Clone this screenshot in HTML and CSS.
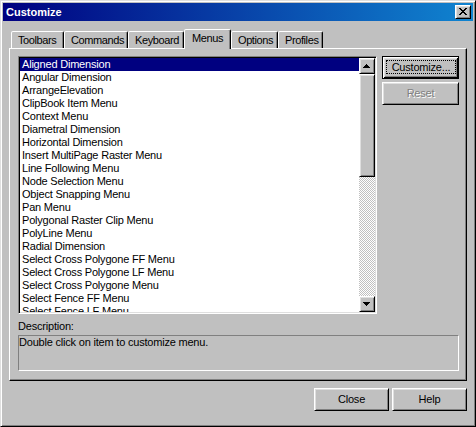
FILE: index.html
```html
<!DOCTYPE html>
<html>
<head>
<meta charset="utf-8">
<title>Customize</title>
<link rel="stylesheet" href="styles.css">
</head>
<body>
<div class="window">
  <div class="titlebar">
    <span class="title">Customize</span>
    <div class="tb-close">
      <svg width="8" height="7" viewBox="0 0 8 7" shape-rendering="crispEdges"><path fill="#000" d="M0 0h2v1H0zM6 0h2v1H6zM1 1h2v1H1zM5 1h2v1H5zM2 2h4v1H2zM3 3h2v1H3zM2 4h4v1H2zM1 5h2v1H1zM5 5h2v1H5zM0 6h2v1H0zM6 6h2v1H6z"/></svg>
    </div>
  </div>
  <div class="tabs">
    <div class="tab w-toolbars">Toolbars</div>
    <div class="tab w-commands">Commands</div>
    <div class="tab w-keyboard">Keyboard</div>
    <div class="tab active w-menus">Menus</div>
    <div class="tab w-options">Options</div>
    <div class="tab w-profiles">Profiles</div>
  </div>
  <div class="panel">
    <div class="top-row">
      <div class="listbox">
        <div class="items">
          <div class="item sel">Aligned Dimension</div>
          <div class="item">Angular Dimension</div>
          <div class="item">ArrangeElevation</div>
          <div class="item">ClipBook Item Menu</div>
          <div class="item">Context Menu</div>
          <div class="item">Diametral Dimension</div>
          <div class="item">Horizontal Dimension</div>
          <div class="item">Insert MultiPage Raster Menu</div>
          <div class="item">Line Following Menu</div>
          <div class="item">Node Selection Menu</div>
          <div class="item">Object Snapping Menu</div>
          <div class="item">Pan Menu</div>
          <div class="item">Polygonal Raster Clip Menu</div>
          <div class="item">PolyLine Menu</div>
          <div class="item">Radial Dimension</div>
          <div class="item">Select Cross Polygone FF Menu</div>
          <div class="item">Select Cross Polygone LF Menu</div>
          <div class="item">Select Cross Polygone Menu</div>
          <div class="item">Select Fence FF Menu</div>
          <div class="item">Select Fence LF Menu</div>
        </div>
        <div class="scrollbar">
          <div class="sb-btn">
            <svg width="7" height="4" viewBox="0 0 7 4" shape-rendering="crispEdges"><path fill="#000" d="M3 0h1v1H3zM2 1h3v1H2zM1 2h5v1H1zM0 3h7v1H0z"/></svg>
          </div>
          <div class="sb-track"><div class="sb-thumb"></div></div>
          <div class="sb-btn">
            <svg width="7" height="4" viewBox="0 0 7 4" shape-rendering="crispEdges"><path fill="#000" d="M0 0h7v1H0zM1 1h5v1H1zM2 2h3v1H2zM3 3h1v1H3z"/></svg>
          </div>
        </div>
      </div>
      <div class="side-buttons">
        <div class="btn default"><span class="focus">Customize...</span></div>
        <div class="btn disabled">Reset</div>
      </div>
    </div>
    <div class="desc-label">Description:</div>
    <div class="desc-box">Double click on item to customize menu.</div>
  </div>
  <div class="footer">
    <div class="btn foot-btn">Close</div>
    <div class="btn foot-btn">Help</div>
  </div>
</div>
</body>
</html>
```
FILE: styles.css
```css
* { box-sizing: border-box; }
html, body { margin: 0; padding: 0; }
body {
  width: 476px;
  height: 427px;
  overflow: hidden;
  background: #c0c0c0;
  font-family: "Liberation Sans", Arial, sans-serif;
  font-size: 11px;
  letter-spacing: -0.2px;
  color: #000;
}
.window {
  width: 476px;
  height: 427px;
  background: #c0c0c0;
  border: 1px solid;
  border-color: #dfdfdf #000 #000 #dfdfdf;
  box-shadow: inset 1px 1px #fff, inset -1px -1px #808080;
  padding: 2px;
  display: flex;
  flex-direction: column;
}
.titlebar {
  height: 18px;
  flex: none;
  background: linear-gradient(to right, #000080, #1084d0);
  display: flex;
  align-items: flex-start;
  justify-content: space-between;
  padding: 0 2px 0 3px;
}
.title {
  color: #fff;
  font-weight: bold;
  line-height: 18px;
  letter-spacing: 0;
}
.tb-close {
  width: 16px;
  height: 14px;
  margin-top: 2px;
  background: #c0c0c0;
  border: 1px solid;
  border-color: #fff #000 #000 #fff;
  box-shadow: inset 1px 1px #dfdfdf, inset -1px -1px #808080;
  padding: 2px 0 0 3px;
}
.tb-close svg, .sb-btn svg { display: block; }

.tabs {
  display: flex;
  align-items: flex-end;
  height: 19px;
  flex: none;
  margin-top: 8px;
  padding-left: 8px;
  position: relative;
  z-index: 1;
}
.tab {
  height: 17px;
  line-height: 16px;
  letter-spacing: -0.4px;
  background: #c0c0c0;
  border: 1px solid;
  border-bottom: none;
  border-color: #fff #000 transparent #fff;
  border-radius: 2px 2px 0 0;
  box-shadow: inset -1px 0 #808080;
  padding-left: 6px;
  white-space: nowrap;
}
.tab.active {
  height: 20px;
  margin-bottom: -1px;
  padding-left: 7px;
}
.w-toolbars { width: 53px; }
.w-commands { width: 64px; }
.w-keyboard { width: 56px; }
.w-menus { width: 47px; }
.w-options { width: 47px; }
.w-profiles { width: 45px; }

.panel {
  margin: 0 6px;
  height: 333px;
  flex: none;
  border: 1px solid;
  border-color: #fff #000 #000 #fff;
  box-shadow: inset -1px -1px #808080;
  padding: 7px 7px 9px 8px;
  display: flex;
  flex-direction: column;
}
.top-row {
  display: flex;
  gap: 5px;
  height: 258px;
  flex: none;
}
.listbox {
  width: 359px;
  height: 258px;
  background: #fff;
  border: 1px solid;
  border-color: #808080 #fff #fff #808080;
  box-shadow: inset 1px 1px #000, inset -1px -1px #dfdfdf;
  padding: 1px;
  display: flex;
}
.items {
  flex: 1;
  overflow: hidden;
}
.item {
  height: 13px;
  line-height: 13px;
  padding-left: 2px;
  white-space: nowrap;
}
.item.sel {
  background: #000080;
  color: #fff;
}
.scrollbar {
  width: 16px;
  display: flex;
  flex-direction: column;
}
.sb-btn, .sb-thumb, .btn {
  background: #c0c0c0;
  border: 1px solid;
  border-color: #fff #000 #000 #fff;
  box-shadow: inset 1px 1px #dfdfdf, inset -1px -1px #808080;
}
.sb-btn {
  height: 16px;
  padding: 5px 0 0 3px;
}
.sb-track {
  flex: 1;
  background: repeating-conic-gradient(#c0c0c0 0 25%, #fff 0 50%) 0 0 / 2px 2px;
}
.sb-thumb {
  height: 103px;
}
.side-buttons {
  width: 77px;
  display: flex;
  flex-direction: column;
  gap: 3px;
}
.btn {
  height: 23px;
  display: flex;
  align-items: center;
  justify-content: center;
  line-height: 13px;
  white-space: nowrap;
}
.btn.default {
  border-color: #000;
  box-shadow: inset 1px 1px #fff, inset -1px -1px #000, inset 2px 2px #dfdfdf, inset -2px -2px #808080;
  align-items: stretch;
  padding: 3px 2px 4px 3px;
}
.focus {
  flex: 1;
  border: 1px dotted #000;
  display: flex;
  align-items: center;
  justify-content: center;
}
.btn.disabled {
  color: #808080;
  text-shadow: 1px 1px #fff;
}
.desc-label {
  margin-top: 6px;
  margin-bottom: 2px;
  line-height: 13px;
}
.desc-box {
  height: 36px;
  flex: none;
  border: 1px solid;
  border-color: #808080 #fff #fff #808080;
  line-height: 13px;
}
.footer {
  display: flex;
  justify-content: flex-end;
  gap: 3px;
  margin-top: 7px;
  padding-right: 6px;
}
.foot-btn {
  width: 75px;
}
```
